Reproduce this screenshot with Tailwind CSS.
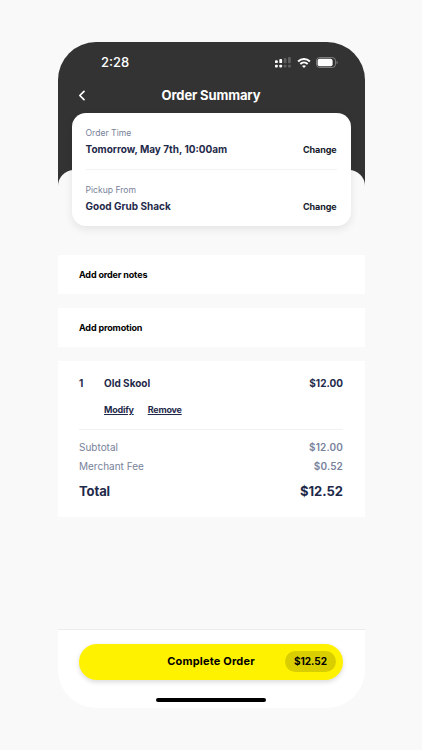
<!DOCTYPE html>
<html lang="en">
<head>
<meta charset="utf-8">
<title>Order Summary</title>
<script src="https://cdn.jsdelivr.net/npm/@tailwindcss/browser@4"></script>
</head>
<body class="h-[750px] overflow-hidden bg-[#f9f9f9] pt-[42px] font-['Inter',sans-serif] text-[#1f2a4b]">
<main class="mx-auto flex h-[666px] w-[307px] flex-col overflow-hidden rounded-[38px] bg-[#f9f9f9]">
  <header class="h-[146px] shrink-0 bg-[#333333] text-white">
    <div class="flex h-[41px] items-center justify-between pr-[26.5px] pl-[43.5px]">
      <span class="text-[13px] leading-none font-medium">2:28</span>
      <div class="flex items-center gap-[5.5px]">
        <svg class="h-[11px] w-[16px]" viewBox="0 0 16 11" fill="#fff">
          <rect x="0" y="3.3" width="2.8" height="2.8" rx=".9"/><rect x="0" y="7.7" width="2.8" height="2.8" rx=".9"/>
          <rect x="4.3" y="2" width="2.8" height="4.1" rx=".9"/><rect x="4.3" y="7.7" width="2.8" height="2.8" rx=".9"/>
          <g opacity=".22"><rect x="8.7" y="1" width="2.8" height="5.2" rx=".9"/><rect x="8.7" y="7.7" width="2.8" height="2.8" rx=".9"/>
          <rect x="13" y="0" width="2.8" height="6.2" rx=".9"/><rect x="13" y="7.7" width="2.8" height="2.8" rx=".9"/></g>
        </svg>
        <svg class="h-[10px] w-[14px]" viewBox="0 0 13 10" fill="none" stroke="#fff" stroke-width="1.9">
          <path d="M.6 3.5C3.8.2 9.2.2 12.4 3.5"/><path d="M2.8 6C4.9 3.9 8.1 3.9 10.2 6"/><path d="M6.5 9.9 4.5 7.9C5.6 6.9 7.4 6.9 8.5 7.9Z" fill="#fff" stroke="none"/>
        </svg>
        <svg class="h-[11px] w-[22px]" viewBox="0 0 22 11" fill="none">
          <rect x=".5" y=".5" width="19" height="10" rx="3.2" stroke="#fff" stroke-opacity=".4" stroke-width=".9"/><rect x="1.6" y="1.7" width="15" height="7.6" rx="2.1" fill="#fff"/><path d="M20.6 4c1.4.5 1.4 2.5 0 3z" fill="#fff" opacity=".45"/>
        </svg>
      </div>
    </div>
    <div class="grid h-[24px] grid-cols-[28px_1fr_28px] items-center">
      <svg class="ml-[20px] h-[11px] w-[8px]" viewBox="0 0 8 11" fill="none" stroke="#fff" stroke-width="1.7" stroke-linecap="round" stroke-linejoin="round"><path d="M6 1.3 1.8 5.5 6 9.7"/></svg>
      <h1 class="text-center text-[13px] leading-none font-bold tracking-[-0.13px]">Order Summary</h1>
    </div>
  </header>

  <div class="-mt-[18px] flex flex-1 flex-col rounded-t-[16px] bg-[#f9f9f9]">
    <section class="mx-[14px] -mt-[57px] h-[113px] rounded-[14px] bg-white px-[14px] shadow-[0_3px_8px_rgba(0,0,0,0.09)]">
      <div class="flex h-[57px] items-end justify-between border-b border-[#f3f3f4] pb-[13px]">
        <div class="pb-px">
          <p class="mb-[5px] text-[8.6px] leading-[10px] text-[#78829a]">Order Time</p>
          <p class="text-[10px] leading-[12px] font-bold">Tomorrow, May 7th, 10:00am</p>
        </div>
        <button class="text-[9px] leading-[12px] font-bold tracking-[-0.1px] text-[#141a2c]">Change</button>
      </div>
      <div class="flex h-[56px] items-end justify-between pb-[13px]">
        <div class="pb-px">
          <p class="mb-[5px] text-[8.6px] leading-[10px] text-[#78829a]">Pickup From</p>
          <p class="text-[10px] leading-[12px] font-bold">Good Grub Shack</p>
        </div>
        <button class="text-[9px] leading-[12px] font-bold tracking-[-0.1px] text-[#141a2c]">Change</button>
      </div>
    </section>

    <section class="mt-[29px] flex h-[39px] items-center bg-white px-[21.5px] text-[9px] font-bold tracking-[-0.15px] text-black">Add order notes</section>
    <section class="mt-[14px] flex h-[39px] items-center bg-white px-[21.5px] text-[9px] font-bold tracking-[-0.15px] text-black">Add promotion</section>

    <section class="mt-[14px] h-[156px] bg-white px-[21.5px] pt-[16px]">
      <div class="flex text-[10px] leading-[12px] font-bold">
        <span class="w-[25px]">1</span><span class="flex-1">Old Skool</span><span>$12.00</span>
      </div>
      <div class="mt-[15px] flex h-[26px] gap-[14px] border-b border-[#f1f1f3] pl-[25px] text-[9px] leading-[12px] font-bold tracking-[-0.22px]">
        <a class="underline">Modify</a><a class="underline">Remove</a>
      </div>
      <dl class="pt-[11px] text-[10px] leading-[12px] text-[#78829a]">
        <div class="flex justify-between"><dt>Subtotal</dt><dd class="font-semibold tracking-[0.15px]">$12.00</dd></div>
        <div class="mt-[7px] flex justify-between"><dt>Merchant Fee</dt><dd class="font-semibold tracking-[0.15px]">$0.52</dd></div>
        <div class="mt-[11px] flex justify-between text-[13px] leading-[16px] font-bold text-[#1f2a4b]"><dt class="tracking-[-0.1px]">Total</dt><dd>$12.52</dd></div>
      </dl>
    </section>

    <footer class="mt-auto h-[79px] border-t border-[#ececec] bg-white px-[21.5px] pt-[14px]">
      <button class="grid h-[36px] w-full grid-cols-[1fr_auto_1fr] items-center rounded-full bg-[#fff200] pr-[7px] text-[11px] font-bold tracking-[0.18px] text-black shadow-[0_2px_5px_rgba(0,0,0,0.15)]">
        <span class="col-start-2 -mt-px pl-[7px]">Complete Order</span>
        <span class="-mt-px flex h-[21px] w-[51px] items-center justify-center justify-self-end rounded-full bg-[#d9ce00] text-[10px] tracking-normal">$12.52</span>
      </button>
      <div class="mx-auto mt-[18px] h-[4px] w-[110px] rounded-full bg-black"></div>
    </footer>
  </div>
</main>
</body>
</html>
